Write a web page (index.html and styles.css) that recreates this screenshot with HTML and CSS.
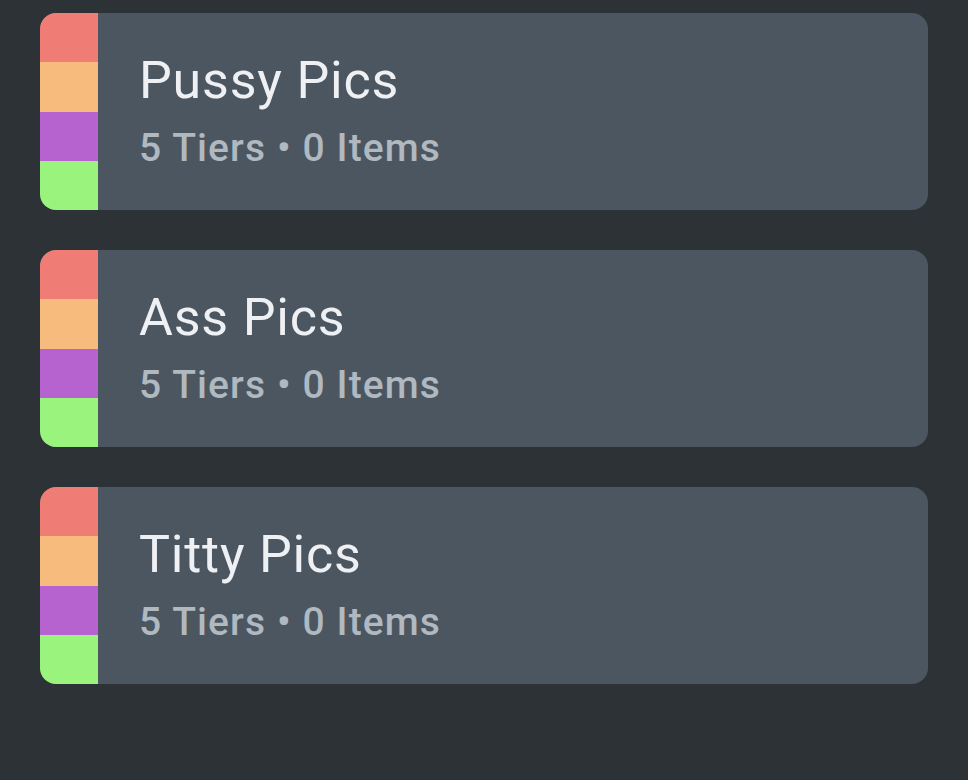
FILE: index.html
```html
<!DOCTYPE html>
<html>
<head>
<meta charset="utf-8">
<link rel="stylesheet" href="styles.css">
</head>
<body>
<div class="list">
  <div class="card">
    <div class="strip"><span class="s1"></span><span class="s2"></span><span class="s3"></span><span class="s4"></span></div>
    <div class="info">
      <div class="title">Pussy Pics</div>
      <div class="meta">5 Tiers • 0 Items</div>
    </div>
  </div>
  <div class="card">
    <div class="strip"><span class="s1"></span><span class="s2"></span><span class="s3"></span><span class="s4"></span></div>
    <div class="info">
      <div class="title">Ass Pics</div>
      <div class="meta">5 Tiers • 0 Items</div>
    </div>
  </div>
  <div class="card">
    <div class="strip"><span class="s1"></span><span class="s2"></span><span class="s3"></span><span class="s4"></span></div>
    <div class="info">
      <div class="title">Titty Pics</div>
      <div class="meta">5 Tiers • 0 Items</div>
    </div>
  </div>
</div>
</body>
</html>
```

FILE: styles.css
```css
html, body {
  margin: 0;
  padding: 0;
  background: #2c3235;
  height: 100%;
}
body {
  font-family: Roboto, "Noto Sans", sans-serif;
}
.list {
  display: flex;
  flex-direction: column;
  gap: 40px;
  padding: 13px 40px 0 40px;
}
.card {
  display: flex;
  height: 197px;
  background: #4b5661;
  border-radius: 16px;
  overflow: hidden;
}
.strip {
  width: 58px;
  display: flex;
  flex-direction: column;
  flex-shrink: 0;
}
.strip span {
  flex: 1;
}
.s1 { background: #f07d75; }
.s2 { background: #f7bb7d; }
.s3 { background: #b663cf; }
.s4 { background: #99f37d; }
.info {
  display: flex;
  flex-direction: column;
  padding-left: 41px;
  padding-top: 37px;
}
.title {
  color: #eef0f3;
  font-size: 52px;
  line-height: 62px;
  letter-spacing: 0.8px;
}
.meta {
  color: #b0b8c0;
  font-size: 39px;
  font-weight: 500;
  line-height: 50px;
  letter-spacing: 1.1px;
  margin-top: 11px;
}
```
